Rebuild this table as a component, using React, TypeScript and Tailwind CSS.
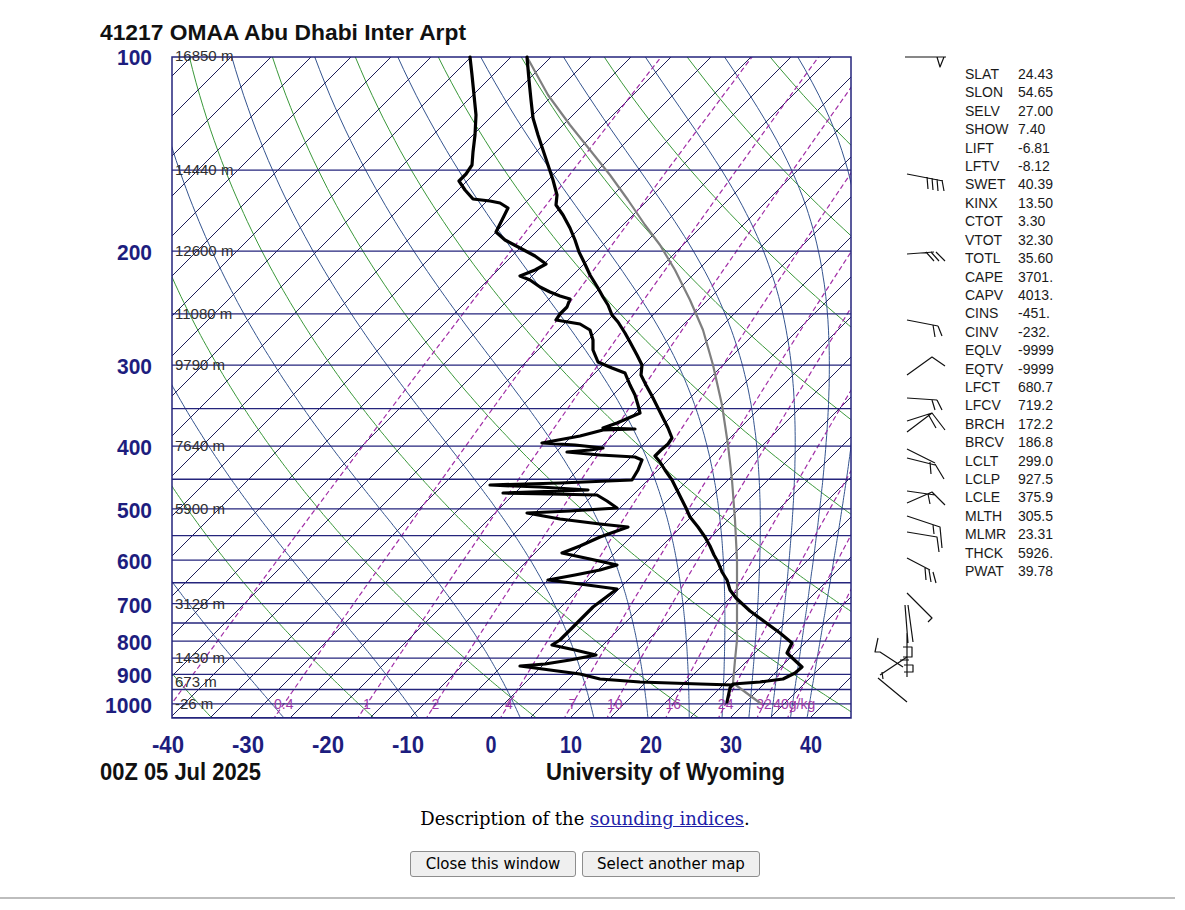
import React from "react";

// plot frame, in page pixels
const L = 172;
const R = 851;
const TOP = 57;
const BOT = 718;

const yP = (p: number) => 56 + 281.4 * Math.log(p / 100);
const xTP = (t: number, p: number) => 490 + 8 * t + (BOT - yP(p));

const PRESSURES: number[] = [];
for (let p = 1060; p >= 95; p -= 5) PRESSURES.push(p);

const range = (a: number, b: number, s: number) => {
  const out: number[] = [];
  for (let v = a; v <= b; v += s) out.push(v);
  return out;
};

const es = (tc: number) => 6.112 * Math.exp((17.67 * tc) / (tc + 243.5));
const thetaE = (tk: number, p: number) => {
  const e = es(tk - 273.15);
  const rs = (0.622 * e) / Math.max(p - e, 0.001);
  return tk * Math.pow(1000 / p, 0.2854) * Math.exp((2490 * rs) / tk);
};
const tdFromR = (r: number, p: number) => {
  const e = (r * p) / (622 + r);
  const a = Math.log(e / 6.112);
  return (243.5 * a) / (17.67 - a);
};
const pts = (arr: number[][]) => arr.map(([x, y]) => `${x.toFixed(1)},${y.toFixed(1)}`).join(" ");

const dryAdiabats = range(195, 615, 20).map((th) =>
  pts(PRESSURES.map((p) => [xTP(th * Math.pow(p / 1000, 0.2857) - 273.15, p), yP(p)]))
);

const moistAdiabats = range(205, 445, 20).map((te) =>
  pts(
    PRESSURES.map((p) => {
      let lo = 120;
      let hi = 330;
      for (let i = 0; i < 40; i++) {
        const mid = (lo + hi) / 2;
        if (thetaE(mid, p) < te) lo = mid;
        else hi = mid;
      }
      return [xTP(lo - 273.15, p), yP(p)];
    })
  )
);

const MIX = [0.1, 0.4, 1, 2, 4, 7, 10, 16, 24, 32, 40];
const MIX_LABELS: Record<number, string> = {
  0.4: "0.4", 1: "1", 2: "2", 4: "4", 7: "7", 10: "10", 16: "16", 24: "24", 32: "32", 40: "40g/kg",
};
const mixLines = MIX.map((r) => pts(PRESSURES.map((p) => [xTP(tdFromR(r, p), p), yP(p)])));

const ISOBARS = range(100, 1050, 50);

const HEIGHTS: [number, string][] = [
  [100, "16850 m"], [150, "14440 m"], [200, "12600 m"], [250, "11080 m"], [300, "9790 m"],
  [400, "7640 m"], [500, "5900 m"], [700, "3128 m"], [850, "1430 m"], [925, "673 m"], [1000, "-26 m"],
];

const P_LABELS = [100, 200, 300, 400, 500, 600, 700, 800, 900, 1000];
const T_LABELS = [-40, -30, -20, -10, 0, 10, 20, 30, 40];

const TEMP =
  "527,57 529,80 531,100 533,118 538,135 543,150 548,165 553,180 557,195 556,205 563,215 570,228 575,240 579,252 584,262 590,275 598,288 603,297 608,305 612,315 618,322 625,333 630,342 637,355 642,365 641,375 646,385 652,396 658,408 663,418 668,428 672,438 668,444 661,450 655,456 660,462 665,470 672,480 677,490 682,500 686,508 690,517 698,527 705,537 710,546 714,555 718,562 722,572 727,580 730,590 736,598 750,611 765,622 780,633 792,643 787,653 802,667 795,673 783,679 760,682 733,684 730,688 727,702";

const DEW =
  "470,57 472,75 474,95 476,115 475,135 473,152 472,165 466,174 459,181 465,190 473,199 490,201 500,203 508,208 503,218 496,232 505,240 520,248 535,256 546,264 535,270 520,276 530,280 540,287 550,292 560,296 570,299 567,307 560,314 556,320 568,322 580,324 590,330 593,340 593,350 598,362 612,368 625,373 630,385 635,395 638,405 640,413 617,423 603,428 635,429 603,430 580,436 542,443 575,445 603,448 590,450 567,452 600,455 635,457 642,460 638,470 632,480 560,483 490,485 540,487 588,490 530,492 503,493 550,494 597,495 607,501 617,508 570,511 527,513 560,519 600,524 628,527 600,537 580,546 562,553 590,559 617,565 600,570 575,575 548,580 580,584 617,589 605,598 593,607 580,620 568,632 560,640 552,645 575,650 596,655 570,660 545,664 520,666 550,670 580,674 600,679 640,682 700,684 733,685";

const PARCEL =
  "527,57 548,95 570,125 590,150 610,175 628,200 645,225 660,245 675,270 690,300 703,330 713,365 722,405 728,445 732,480 735,520 737,560 737,600 737,640 735,660 733,683 760,703";

const INDICES: [string, string][] = [
  ["SLAT", "24.43"], ["SLON", "54.65"], ["SELV", "27.00"], ["SHOW", "7.40"], ["LIFT", "-6.81"],
  ["LFTV", "-8.12"], ["SWET", "40.39"], ["KINX", "13.50"], ["CTOT", "3.30"], ["VTOT", "32.30"],
  ["TOTL", "35.60"], ["CAPE", "3701."], ["CAPV", "4013."], ["CINS", "-451."], ["CINV", "-232."],
  ["EQLV", "-9999"], ["EQTV", "-9999"], ["LFCT", "680.7"], ["LFCV", "719.2"], ["BRCH", "172.2"],
  ["BRCV", "186.8"], ["LCLT", "299.0"], ["LCLP", "927.5"], ["LCLE", "375.9"], ["MLTH", "305.5"],
  ["MLMR", "23.31"], ["THCK", "5926."], ["PWAT", "39.78"],
];

// wind barbs, drawn as plain strokes
const BARBS = [
  "M905 57 H946 M937 57 L940 67 L944 57",
  "M907 174 L943 181 M927 177 L928 189 M932 178 L933 190 M937 179 L938 191 M942 180 L944 191",
  "M907 254 L934 252 M926 252 L934 261 M931 252 L939 261 M936 252 L945 261",
  "M907 320 L938 326 M933 325 L935 337 M938 326 L942 336",
  "M907 375 L932 357 L945 366",
  "M907 398 L937 400 M932 400 L935 410 M937 400 L942 410",
  "M907 421 L932 413 M907 432 L932 413 L945 430 M928 414 L936 428",
  "M907 449 L935 463 M907 458 L935 465 M930 462 L931 474 M935 464 L944 479",
  "M907 491 L935 495 M907 503 L932 492 L945 505 M928 494 L930 504",
  "M907 516 L940 527 L942 548 M907 532 L937 537 L939 552 M933 525 L934 534",
  "M907 558 L930 570 M925 568 L926 580 M929 570 L931 582 M933 572 L936 583",
  "M907 593 L932 618 L928 622 M905 605 L908 643 M908 605 L913 642 M907 633 L907 677",
  "M878 638 L875 652 L880 652 L903 667 M880 675 L907 657 M878 678 L907 702 M882 672 L883 679",
  "M903 647 L912 647 L912 657 L903 657 M904 665 L913 665 L913 672 L904 672 M900 660 L909 660",
];

const BOLD = "'Liberation Sans', Arial, sans-serif";
const NAVY = "#1d1d7e";

function SkewT() {
  return (
    <svg width={990} height={780} viewBox="90 15 990 780" className="mt-[15px] block">
      <defs>
        <clipPath id="plot">
          <rect x={L} y={TOP} width={R - L} height={BOT - TOP} />
        </clipPath>
      </defs>

      <g clipPath="url(#plot)" fill="none">
        {dryAdiabats.map((d, i) => (
          <polyline key={`d${i}`} points={d} stroke="#3a983a" strokeWidth={1} />
        ))}
        {moistAdiabats.map((d, i) => (
          <polyline key={`m${i}`} points={d} stroke="#34548f" strokeWidth={1} />
        ))}
        {range(-26, 10, 1).map((k) => (
          <line key={`t${k}`} x1={490 + 40 * k} y1={BOT} x2={490 + 40 * k + 661} y2={TOP} stroke="#1e1e58" strokeWidth={1} />
        ))}
        {mixLines.map((d, i) => (
          <polyline key={`r${i}`} points={d} stroke="#a02ca6" strokeWidth={1.2} strokeDasharray="5 3" />
        ))}
        {ISOBARS.map((p) => (
          <line key={`p${p}`} x1={L} x2={R} y1={yP(p)} y2={yP(p)} stroke="#25257c" strokeWidth={1.3} />
        ))}
      </g>
      <rect x={L} y={TOP} width={R - L} height={BOT - TOP} fill="none" stroke="#25257c" strokeWidth={1.5} />

      {HEIGHTS.map(([p, t]) => (
        <text key={t} x={175} y={yP(p) + 5} fontSize={15} fill="#2f2f2f" fontFamily="'Liberation Sans', Arial, sans-serif">
          {t}
        </text>
      ))}
      {MIX.filter((r) => MIX_LABELS[r]).map((r) => (
        <text
          key={`l${r}`}
          x={xTP(tdFromR(r, 1000), 1000)}
          y={709}
          fontSize={14}
          textAnchor="middle"
          fill="#a23aa8"
          fontFamily="'Liberation Sans', Arial, sans-serif"
        >
          {MIX_LABELS[r]}
        </text>
      ))}

      <g fill="none" strokeLinejoin="round" strokeLinecap="round">
        <polyline points={PARCEL} stroke="#7f7f7f" strokeWidth={2.2} />
        <polyline points={TEMP} stroke="#000" strokeWidth={3.2} />
        <polyline points={DEW} stroke="#000" strokeWidth={3.2} />
      </g>

      <text x={100} y={40} fontSize={22} fontWeight={700} fill="#111" fontFamily={BOLD} textLength={366} lengthAdjust="spacingAndGlyphs">
        41217 OMAA Abu Dhabi Inter Arpt
      </text>

      {P_LABELS.map((p) => (
        <text
          key={`pl${p}`}
          x={152}
          y={yP(p) + 9}
          fontSize={22}
          fontWeight={700}
          fill={NAVY}
          textAnchor="end"
          fontFamily={BOLD}
          textLength={String(p).length * 12 - 1}
          lengthAdjust="spacingAndGlyphs"
        >
          {p}
        </text>
      ))}

      {T_LABELS.map((t) => (
        <text
          key={`tl${t}`}
          x={(t < 0 ? 488 : 491) + 8 * t}
          y={753}
          fontSize={23}
          fontWeight={700}
          fill={NAVY}
          textAnchor="middle"
          fontFamily={BOLD}
          textLength={t < 0 ? 32 : t === 0 ? 11 : 22}
          lengthAdjust="spacingAndGlyphs"
        >
          {t}
        </text>
      ))}

      <text x={100} y={780} fontSize={24} fontWeight={700} fill="#111" fontFamily={BOLD} textLength={161} lengthAdjust="spacingAndGlyphs">
        00Z 05 Jul 2025
      </text>
      <text x={546} y={780} fontSize={24} fontWeight={700} fill="#111" fontFamily={BOLD} textLength={239} lengthAdjust="spacingAndGlyphs">
        University of Wyoming
      </text>

      <g fill="none" stroke="#111" strokeWidth={1.2} strokeLinejoin="round">
        {BARBS.map((d, i) => (
          <path key={`b${i}`} d={d} />
        ))}
      </g>

      {INDICES.map(([k, v], i) => (
        <g key={k} fontSize={14} fill="#1a1a1a" fontFamily="'Liberation Sans', Arial, sans-serif">
          <text x={965} y={74 + 18.41 * i + 5}>{k}</text>
          <text x={1018} y={74 + 18.41 * i + 5}>{v}</text>
        </g>
      ))}
    </svg>
  );
}

export default function App() {
  return (
    <div className="min-h-[910px] w-full bg-white">
      <div className="flex w-[1170px] flex-col items-center">
        <SkewT />
        <p className="mt-[11px] font-['DejaVu_Serif',serif] text-[18px] leading-[26px] text-black">
          Description of the{" "}
          <a href="#" className="text-[#1e1ea8] underline">
            sounding indices
          </a>
          .
        </p>
        <div className="mt-[19px] flex gap-[6px]">
          <button className="h-[26px] w-[166px] rounded-[3px] border border-[#8d8d8d] bg-[#efefef] font-['DejaVu_Sans',sans-serif] text-[15px] leading-none text-black">
            Close this window
          </button>
          <button className="h-[26px] w-[178px] rounded-[3px] border border-[#8d8d8d] bg-[#efefef] font-['DejaVu_Sans',sans-serif] text-[15px] leading-none text-black">
            Select another map
          </button>
        </div>
      </div>
      <hr className="mt-[20px] w-[1175px] border-0 border-t-2 border-[#bdbdbd]" />
    </div>
  );
}
